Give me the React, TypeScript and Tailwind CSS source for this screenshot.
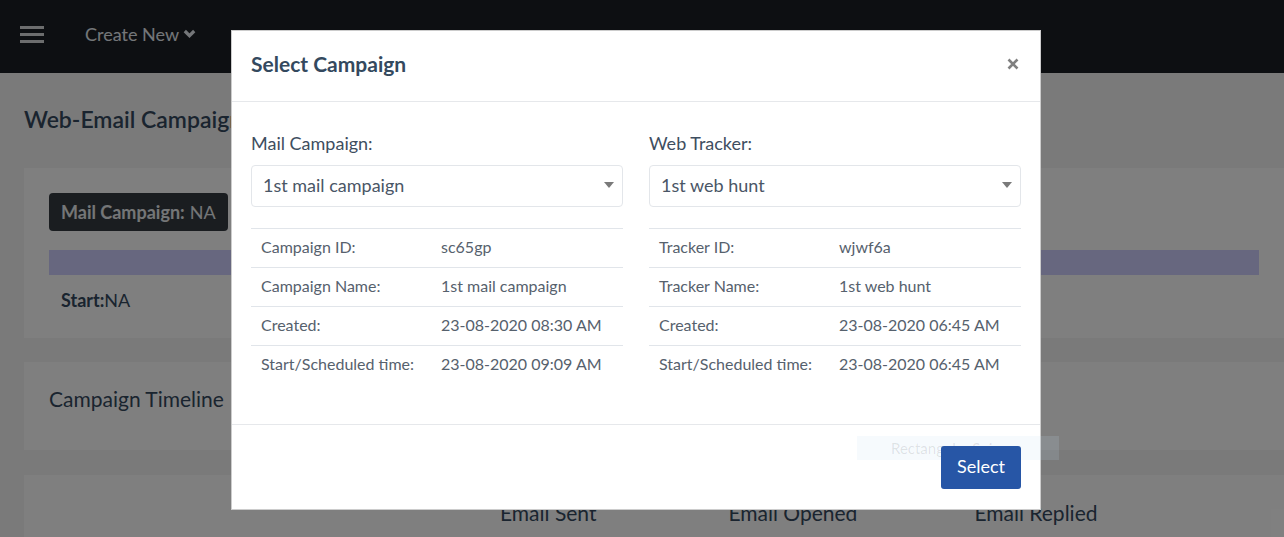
import React from "react";

const font = { fontFamily: "Lato, 'Noto Sans', sans-serif" };

function Caret() {
  return (
    <svg width="10" height="6" viewBox="0 0 10 6" className="shrink-0">
      <path d="M0 0 H10 L5 6 Z" fill="#7a7a7a" />
    </svg>
  );
}

function InfoTable({ rows }: { rows: [string, string][] }) {
  return (
    <div className="mt-[21px]">
      {rows.map(([k, v]) => (
        <div
          key={k}
          className="flex h-[39px] items-center border-t border-[#e1e5ea] pb-[3px] text-[16px] text-[#56616d]"
        >
          <div className="w-[190px] pl-[10px]">{k}</div>
          <div>{v}</div>
        </div>
      ))}
    </div>
  );
}

function Column({
  label,
  value,
  rows,
}: {
  label: string;
  value: string;
  rows: [string, string][];
}) {
  return (
    <div className="flex flex-col">
      <div className="h-[24px] text-[18px] leading-[24px] text-[#3e4e60]">{label}</div>
      <div className="mt-[10px] flex h-[42px] items-center justify-between rounded-[4px] border border-[#e3e6ea] pb-[2px] pl-[11px] pr-[8px] text-[18px] text-[#4a5666]">
        <span>{value}</span>
        <Caret />
      </div>
      <InfoTable rows={rows} />
    </div>
  );
}

export default function App() {
  return (
    <div className="relative h-[537px] w-[1284px] overflow-hidden bg-[#f5f5f5]" style={font}>
      {/* Navbar */}
      <div className="flex h-[73px] items-center bg-[#1b1f25] pb-[5px] pl-[20px]">
        <div className="flex w-[24px] flex-col gap-[4px]">
          <span className="block h-[3px] w-[24px] bg-[#d8dadd]" />
          <span className="block h-[3px] w-[24px] bg-[#d8dadd]" />
          <span className="block h-[3px] w-[24px] bg-[#d8dadd]" />
        </div>
        <div className="ml-[41px] flex items-center gap-[4px] text-[18px] text-[#e8edf3]">
          <span>Create New</span>
          <svg width="13" height="10" viewBox="0 0 13 10">
            <path d="M1.8 2 L6.5 6.7 L11.2 2" stroke="#e8edf3" strokeWidth="3.2" fill="none" />
          </svg>
        </div>
      </div>

      {/* Page */}
      <div className="pl-[24px] pt-[31px]">
        <h1 className="h-[30px] text-[23px] font-semibold leading-[30px] text-[#34495e]">
          Web-Email Campaign Dashboard
        </h1>
        <div className="mt-[34px] bg-white px-[25px] pb-[26px] pt-[25px]">
          <div className="inline-flex h-[38px] items-center rounded-[4px] bg-[#353a40] px-[12px] text-[18px] text-[#e9ecef]">
            <span className="font-bold">Mail Campaign:</span>
            <span className="ml-[5px]">NA</span>
          </div>
          <div className="mt-[19px] h-[25px] bg-[#cecefe]" />
          <div className="mt-[13px] pl-[12px] text-[18px] leading-[24px] text-[#34495e]">
            <span className="font-bold">Start:</span>NA
          </div>
        </div>
        <div className="mt-[24px] h-[88px] bg-white px-[25px] pt-[25px] text-[21px] leading-[24px] text-[#34495e]">
          Campaign Timeline
        </div>
        <div className="mt-[25px] h-[80px] bg-white pt-[22px]">
          <div className="flex text-[21px] text-[#34495e]">
            <span className="ml-[476px]">Email Sent</span>
            <span className="ml-[132px]">Email Opened</span>
            <span className="ml-[117px]">Email Replied</span>
          </div>
        </div>
      </div>

      {/* Overlay */}
      <div className="absolute inset-0 bg-black/50" />

      {/* Modal */}
      <div className="absolute left-[231px] top-[30px] w-[810px] border border-black/20 bg-white">
        <div className="flex h-[71px] items-center justify-between border-b border-[#e6e8eb] pb-[4px] pl-[19px] pr-[21px]">
          <div className="text-[21px] font-bold text-[#34495e]">Select Campaign</div>
          <svg width="12" height="12" viewBox="0 0 12 12">
            <path d="M1.5 1.5 L10.5 10.5 M10.5 1.5 L1.5 10.5" stroke="#808080" strokeWidth="2.6" />
          </svg>
        </div>
        <div className="grid grid-cols-2 gap-[26px] px-[19px] pb-[40px] pt-[29px]">
          <Column
            label="Mail Campaign:"
            value="1st mail campaign"
            rows={[
              ["Campaign ID:", "sc65gp"],
              ["Campaign Name:", "1st mail campaign"],
              ["Created:", "23-08-2020 08:30 AM"],
              ["Start/Scheduled time:", "23-08-2020 09:09 AM"],
            ]}
          />
          <Column
            label="Web Tracker:"
            value="1st web hunt"
            rows={[
              ["Tracker ID:", "wjwf6a"],
              ["Tracker Name:", "1st web hunt"],
              ["Created:", "23-08-2020 06:45 AM"],
              ["Start/Scheduled time:", "23-08-2020 06:45 AM"],
            ]}
          />
        </div>
        <div className="relative flex h-[85px] items-center justify-end border-t border-[#e6e8eb] pr-[19px]">
          {/* Snip tooltip ghost, drawn under the button */}
          <div className="absolute left-[625px] top-[11px] flex h-[24px] w-[202px] items-center bg-[#c0dcf0]/15 pl-[34px] text-[15px] text-black/10">
            Rectangular Snip
          </div>
          <button className="relative h-[43px] w-[80px] rounded-[3px] bg-[#2756a6] pb-[2px] text-[18px] text-white">
            Select
          </button>
        </div>
      </div>
    </div>
  );
}
